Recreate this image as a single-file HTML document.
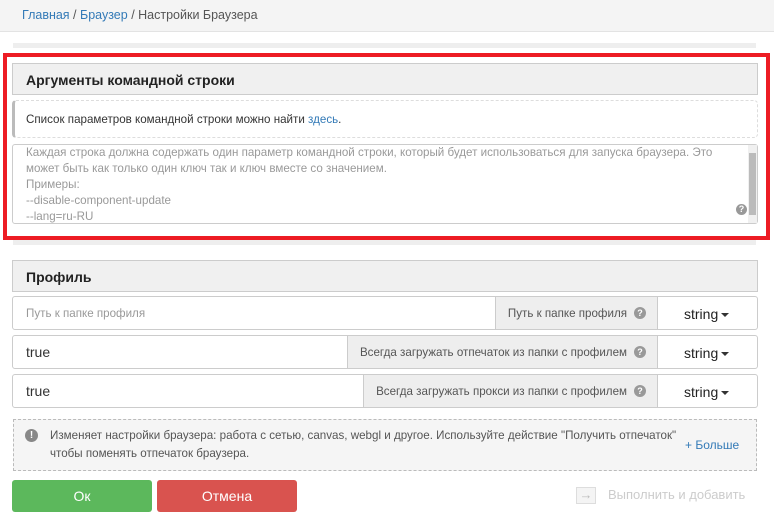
<!DOCTYPE html><html><head><meta charset="utf-8"><style>
*{box-sizing:border-box}body{margin:0;width:774px;height:521px;background:#fff;font-family:"Liberation Sans",sans-serif;position:relative;overflow:hidden;color:#333}
.a{position:absolute}
.top{left:0;top:0;width:774px;height:32px;background:#f4f4f4;border-bottom:1px solid #e3e3e3;font-size:12.5px;padding:8px 0 0 22px;color:#555}
.top a{color:#337ab7}
.bar{background:#eee;height:5px;left:13px;width:743px}
.red{left:3px;top:53px;width:767px;height:187px;border:4px solid #ed1c24}
.hdr{left:12px;width:746px;height:32px;background:#f0f0f0;border:1px solid #ccc;font-weight:bold;font-size:14px;padding:8px 0 0 13px;color:#222}
.inp{border:1px solid #ccc;border-radius:3px;height:34px;font-size:14px}
.lab{background:#eee;border-left:1px solid #ccc;font-size:11.6px;color:#555;text-align:right;padding:10px 30px 0 0;height:32px}
.q{display:inline-block;width:12px;height:12px;border-radius:50%;background:#999;color:#fff;font-size:9px;font-weight:bold;text-align:center;line-height:12px;position:absolute;right:11px;top:10px}
.dd{border-left:1px solid #ccc;font-size:14px;color:#222;padding:9px 0 0 26px}
.car{display:inline-block;border-left:4px solid transparent;border-right:4px solid transparent;border-top:4px solid #333;vertical-align:middle;margin-left:3px}
</style></head><body>
<div class="a top"><a>Главная</a> / <a>Браузер</a> / Настройки Браузера</div>
<div class="a bar" style="top:43px"></div>
<div class="a red"></div>
<div class="a hdr" style="top:63px">Аргументы командной строки</div>
<div class="a" style="left:12px;top:100px;width:746px;height:38px;border:1px dashed #ddd;border-left:3px solid #bbb;border-radius:4px;font-size:11.6px;padding:12px 0 0 11px">Список параметров командной строки можно найти <span style="color:#337ab7">здесь</span>.</div>
<div class="a" style="left:12px;top:144px;width:746px;height:80px;border:1px solid #ccc;border-radius:3px;font-size:11.6px;line-height:16px;color:#999;padding:0 0 0 13px">Каждая строка должна содержать один параметр командной строки, который будет использоваться для запуска браузера. Это<br>может быть как только один ключ так и ключ вместе со значением.<br>Примеры:<br>--disable-component-update<br>--lang=ru-RU
<div class="a" style="right:0;top:0;width:9px;height:78px;background:#f0f0f0"><div style="margin:8px 1px 0;height:62px;background:#bbb"></div></div>
<div class="q" style="right:10px;top:59px;width:11px;height:11px;line-height:11px">?</div></div>
<div class="a bar" style="top:240px"></div>
<div class="a hdr" style="top:260px">Профиль</div>
<div class="a inp" style="left:12px;top:296px;width:746px;overflow:hidden"><span class="a" style="left:13px;top:10px;font-size:11.6px;color:#999">Путь к папке профиля</span><div class="a lab" style="left:482px;width:162px">Путь к папке профиля<span class="q">?</span></div><div class="a dd" style="left:644px;width:101px;height:32px">string<span class="car"></span></div></div>
<div class="a inp" style="left:12px;top:335px;width:746px;overflow:hidden"><span class="a" style="left:13px;top:8px">true</span><div class="a lab" style="left:334px;width:310px">Всегда загружать отпечаток из папки с профилем<span class="q">?</span></div><div class="a dd" style="left:644px;width:101px;height:32px">string<span class="car"></span></div></div>
<div class="a inp" style="left:12px;top:374px;width:746px;overflow:hidden"><span class="a" style="left:13px;top:8px">true</span><div class="a lab" style="left:350px;width:294px">Всегда загружать прокси из папки с профилем<span class="q">?</span></div><div class="a dd" style="left:644px;width:101px;height:32px">string<span class="car"></span></div></div>
<div class="a" style="left:13px;top:419px;width:744px;height:52px;border:1px dashed #bbb;background:#f5f5f5;font-size:11.6px;line-height:18px;color:#555;padding:7px 0 0 36px"><span class="a" style="left:11px;top:9px;width:13px;height:13px;border-radius:50%;background:#888;color:#fff;font-size:10px;font-weight:bold;text-align:center;line-height:13px">!</span>Изменяет настройки браузера: работа с сетью, canvas, webgl и другое. Используйте действие "Получить отпечаток"<br>чтобы поменять отпечаток браузера.<span class="a" style="left:671px;top:16px;color:#337ab7;font-size:12px">+ Больше</span></div>
<div class="a" style="left:12px;top:480px;width:140px;height:32px;background:#5cb85c;border-radius:3px;color:#fff;font-size:14px;text-align:center;line-height:32px">Ок</div>
<div class="a" style="left:157px;top:480px;width:140px;height:32px;background:#d9534f;border-radius:3px;color:#fff;font-size:14px;text-align:center;line-height:32px">Отмена</div>
<div class="a" style="left:576px;top:487px;width:20px;height:17px;border:1px solid #ddd;background:#f4f4f4;color:#bbb;font-size:13px;line-height:14px;text-align:center">→</div>
<div class="a" style="left:608px;top:487px;font-size:13px;color:#ccc">Выполнить и добавить</div>
</body></html>
